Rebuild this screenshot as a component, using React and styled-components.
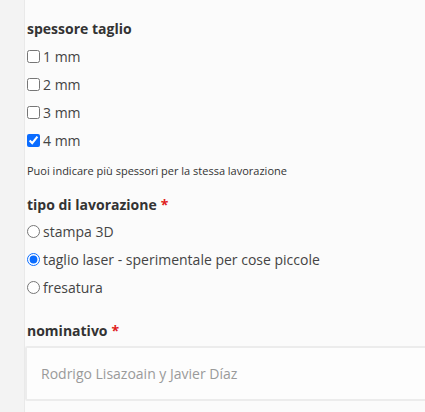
import React from "react";
import styled, { createGlobalStyle } from "styled-components";

const GlobalStyle = createGlobalStyle`
  body {
    margin: 0;
    background: #f3f3f3;
    font-family: "Open Sans", "Liberation Sans", sans-serif;
    overflow: hidden;
  }
`;

const Page = styled.div`
  display: flex;
  height: 412px;
  overflow: hidden;
`;

const Gutter = styled.div`
  width: 24px;
  flex-shrink: 0;
  background: #f3f3f3;
`;

const Panel = styled.div`
  flex: 1;
  min-width: 0;
  background: #fbfbfb;
  border-left: 1px solid #e9e9e9;
  padding-top: 18px;
`;

const Label = styled.div`
  font-size: 14px;
  font-weight: 700;
  color: #333;
  line-height: 22px;
  padding-left: 2px;
  margin-bottom: ${(p) => p.gap ?? 2}px;
`;

const Required = styled.span`
  color: #e02020;
  margin-left: 4px;
`;

const Option = styled.label`
  display: flex;
  align-items: center;
  height: 28px;
  padding-left: 2px;
  font-size: 14px;
  color: #444;
  input {
    margin: 0 3px 0 0;
    width: 13px;
    height: 13px;
    accent-color: #0a6cff;
  }
`;

const Help = styled.div`
  font-size: 11px;
  color: #333;
  padding-left: 2px;
  margin: 9px 0 16px;
`;

const Group = styled.div`
  margin-bottom: ${(p) => p.gap || 0}px;
`;

const TextInput = styled.input`
  display: block;
  box-sizing: border-box;
  width: 420px;
  height: 55px;
  border: 2px solid #ececec;
  border-radius: 2px;
  background: #fdfdfd;
  padding: 0 14px;
  font-family: "Open Sans", "Liberation Sans", sans-serif;
  font-size: 14px;
  color: #333;
  outline: none;
  &::placeholder {
    color: #9a9a9a;
  }
`;

const Hint = styled.div`
  font-size: 13px;
  color: #555;
  margin-top: 8px;
  padding-left: 102px;
  white-space: nowrap;
`;

export default function App() {
  return (
    <>
      <GlobalStyle />
      <Page>
        <Gutter />
        <Panel>
          <Group>
            <Label>spessore taglio</Label>
            {["1 mm", "2 mm", "3 mm", "4 mm"].map((s) => (
              <Option key={s}>
                <input type="checkbox" defaultChecked={s === "4 mm"} />
                {s}
              </Option>
            ))}
            <Help>Puoi indicare più spessori per la stessa lavorazione</Help>
          </Group>
          <Group gap={19}>
            <Label gap={1}>
              tipo di lavorazione<Required>*</Required>
            </Label>
            {["stampa 3D", "taglio laser - sperimentale per cose piccole", "fresatura"].map((s, i) => (
              <Option key={s}>
                <input type="radio" name="tipo" defaultChecked={i === 1} />
                {s}
              </Option>
            ))}
          </Group>
          <Group>
            <Label gap={4}>
              nominativo<Required>*</Required>
            </Label>
            <TextInput placeholder="Rodrigo Lisazoain y Javier Díaz" />
            <Hint>il nome con cui vuoi firmare il lavoro, sarà visibile</Hint>
          </Group>
        </Panel>
      </Page>
    </>
  );
}
